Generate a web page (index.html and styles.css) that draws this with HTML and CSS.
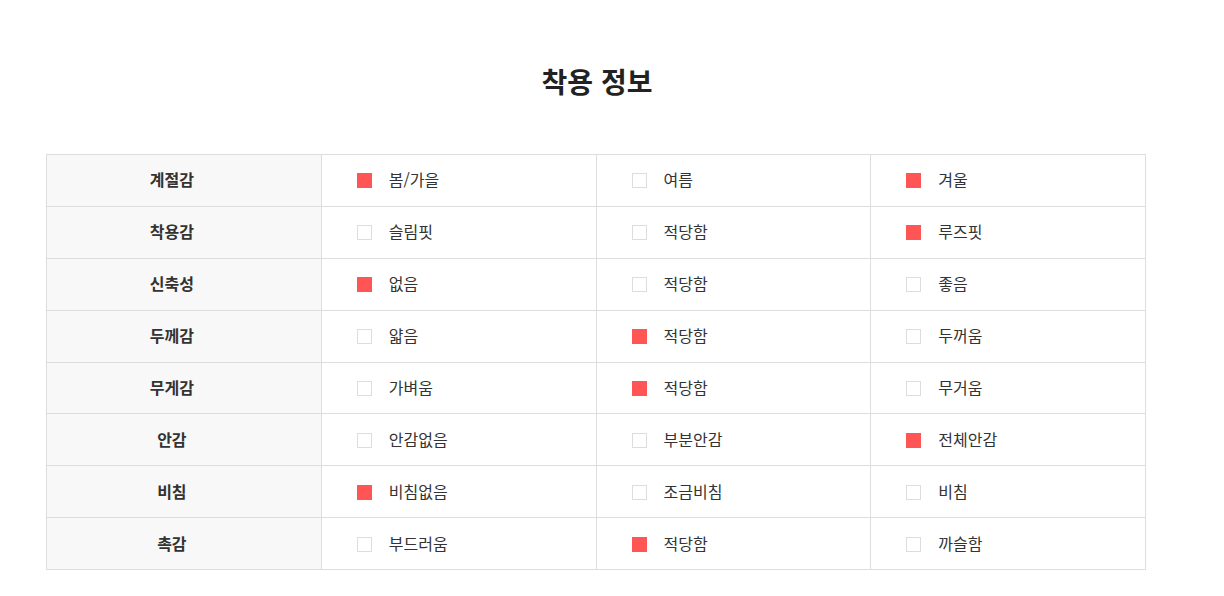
FILE: index.html
```html
<!DOCTYPE html>
<html lang="ko">
<head>
<meta charset="utf-8">
<link rel="stylesheet" href="styles.css">
</head>
<body>
<div class="wrap">
  <h2 class="title">착용 정보</h2>
  <table class="fit">
    <tr><th>계절감</th><td><span class="box on"></span>봄/가을</td><td><span class="box"></span>여름</td><td><span class="box on"></span>겨울</td></tr>
    <tr><th>착용감</th><td><span class="box"></span>슬림핏</td><td><span class="box"></span>적당함</td><td><span class="box on"></span>루즈핏</td></tr>
    <tr><th>신축성</th><td><span class="box on"></span>없음</td><td><span class="box"></span>적당함</td><td><span class="box"></span>좋음</td></tr>
    <tr><th>두께감</th><td><span class="box"></span>얇음</td><td><span class="box on"></span>적당함</td><td><span class="box"></span>두꺼움</td></tr>
    <tr><th>무게감</th><td><span class="box"></span>가벼움</td><td><span class="box on"></span>적당함</td><td><span class="box"></span>무거움</td></tr>
    <tr><th>안감</th><td><span class="box"></span>안감없음</td><td><span class="box"></span>부분안감</td><td><span class="box on"></span>전체안감</td></tr>
    <tr><th>비침</th><td><span class="box on"></span>비침없음</td><td><span class="box"></span>조금비침</td><td><span class="box"></span>비침</td></tr>
    <tr><th>촉감</th><td><span class="box"></span>부드러움</td><td><span class="box on"></span>적당함</td><td><span class="box"></span>까슬함</td></tr>
  </table>
</div>
</body>
</html>
```
FILE: styles.css
```css
* { box-sizing: border-box; }
html, body { margin: 0; padding: 0; background: #fff; }
body {
  font-family: "Noto Sans CJK KR", "Noto Sans", sans-serif;
  color: #333;
}
.wrap {
  padding: 60px 78px 0 46px;
}
.title {
  margin: 0 0 52px 0;
  text-align: center;
  font-size: 28px;
  font-weight: 700;
  color: #222;
  line-height: 42px;
  padding-left: 2px;
}
.fit {
  width: 1100px;
  border-collapse: collapse;
  table-layout: fixed;
  border: 1px solid #ddd;
}
.fit th, .fit td {
  border: 1px solid #ddd;
  height: 51.9px;
  font-size: 16px;
  padding: 0 0 2px 0;
  vertical-align: middle;
}
.fit th {
  background: #f8f8f8;
  font-weight: 700;
  color: #333;
  text-align: center;
  padding-right: 24px;
}
.fit td {
  padding-left: 35px;
  color: #333;
}
.box {
  display: inline-block;
  width: 15px;
  height: 15px;
  border: 1px solid #ddd;
  background: #fff;
  margin-right: 17px;
  vertical-align: -2px;
}
.box.on {
  background: #ff5555;
  border-color: #ff5555;
}
```
